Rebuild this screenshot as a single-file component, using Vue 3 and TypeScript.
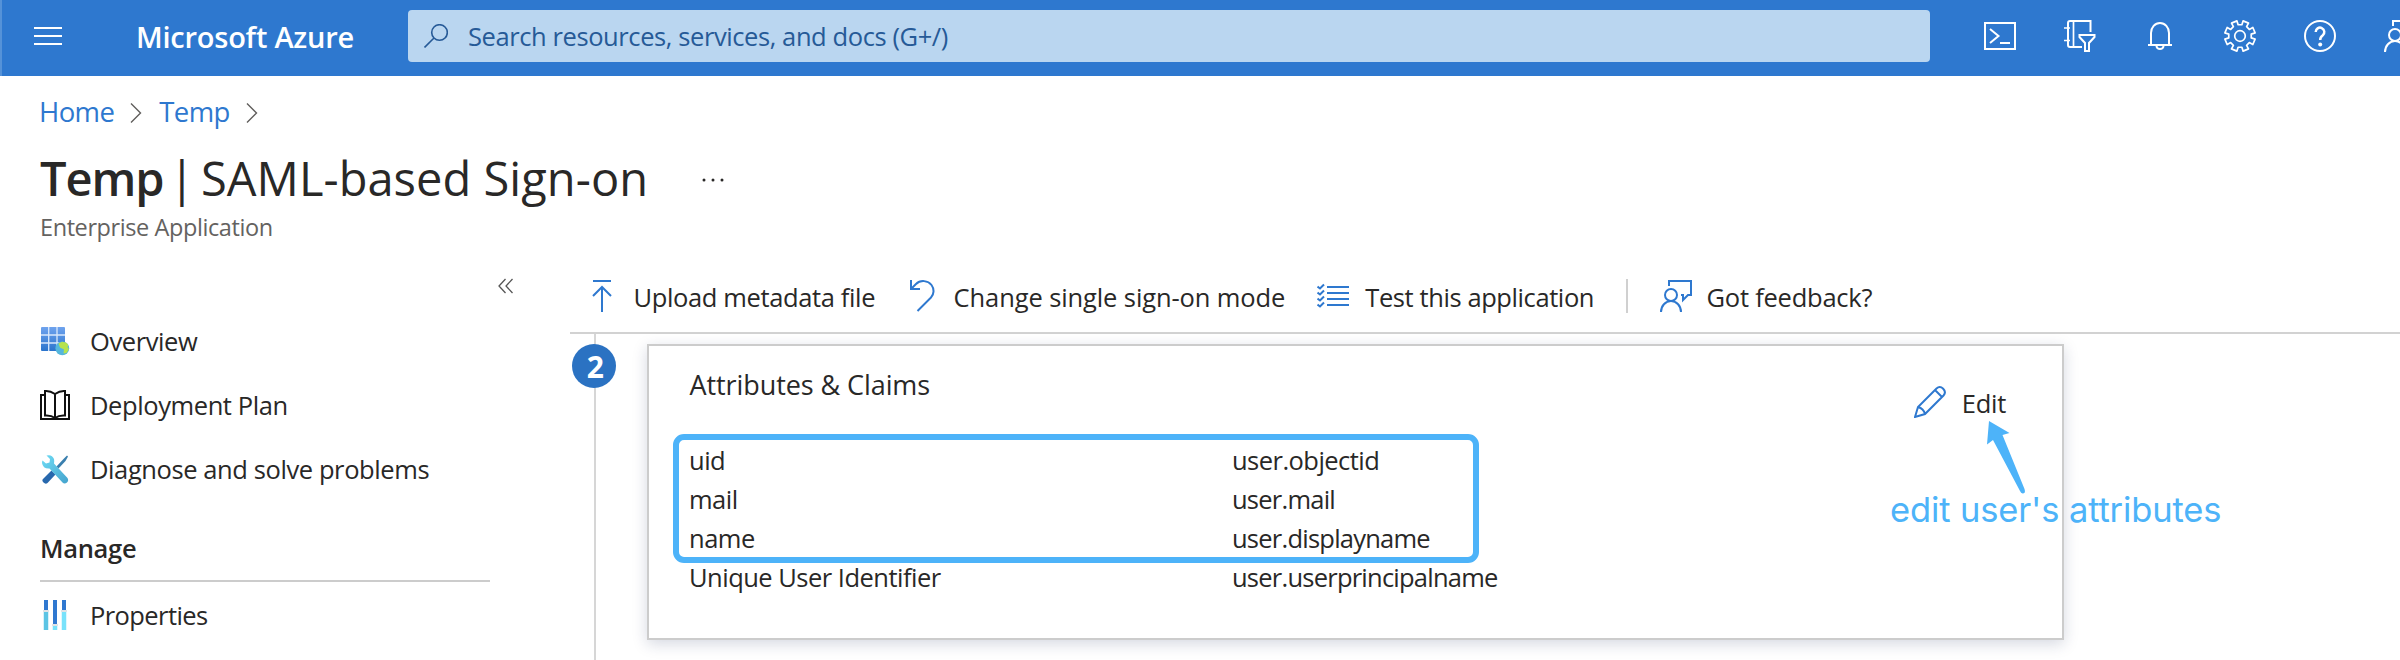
<script setup lang="ts">
interface Claim {
  name: string
  value: string
}

const claims: Claim[] = [
  { name: 'uid', value: 'user.objectid' },
  { name: 'mail', value: 'user.mail' },
  { name: 'name', value: 'user.displayname' },
  { name: 'Unique User Identifier', value: 'user.userprincipalname' },
]

// Outline of an eight-tooth gear, centred on (16, 16)
function gearPath(): string {
  const pts: string[] = []
  for (let i = 0; i < 8; i++) {
    const mid = 22.5 + i * 45
    const corners: [number, number][] = [[-13, 11.4], [-11, 15.4], [11, 15.4], [13, 11.4]]
    for (const [offset, r] of corners) {
      const a = ((mid + offset - 90) * Math.PI) / 180
      pts.push(`${(16 + r * Math.cos(a)).toFixed(2)} ${(16 + r * Math.sin(a)).toFixed(2)}`)
    }
  }
  return `M${pts.join('L')}Z`
}
const gear = gearPath()
</script>

<template>
  <div class="page">
    <header class="topbar">
      <svg class="burger" viewBox="0 0 28 18"><path d="M0 1H28M0 9H28M0 17H28" /></svg>
      <span class="brand">Microsoft Azure</span>
      <div class="search">
        <svg class="lens" viewBox="0 0 24 24"><circle cx="15.5" cy="8.5" r="7.8" /><path d="M10 14L.5 23.5" /></svg>
        <span>Search resources, services, and docs (G+/)</span>
      </div>
      <nav class="tools">
        <svg viewBox="0 0 32 32"><path d="M1 3H31V29H1Z" /><path d="M6 9L14.500 16L6 23" /><path d="M16 23H26" /></svg>
        <svg viewBox="0 0 32 32">
          <path d="M26.500 12V1H6Q4 1 4 3V25Q4 27 6 27H18" /><path class="thin" d="M9.500 1V27M0 8H6M0 20.500H6" />
          <path d="M15.500 15H30.500V17L25 23V31H21V23L15.500 17Z" />
        </svg>
        <svg viewBox="0 0 32 32"><path d="M7 25V13A9 10 0 0 1 25 13V25" /><path d="M4 25H28" /><path d="M12.500 26A3.500 3 0 0 0 19.500 26" /></svg>
        <svg viewBox="0 0 32 32"><path :d="gear" class="thin" stroke-linejoin="round" /><circle class="thin" cx="16" cy="16" r="5.300" /></svg>
        <svg viewBox="0 0 32 32">
          <circle cx="16" cy="16" r="15" />
          <path class="heavy" d="M11.700 12A4.300 4.300 0 1 1 18.800 15.200Q16.200 17 16.200 20" /><circle class="dot" cx="16.200" cy="24.500" r="2" />
        </svg>
        <svg viewBox="0 0 32 32"><path d="M9 6V1H31V15H28L23 20V15H21" /><circle cx="11" cy="15" r="6" /><path d="M1 32A10 11 0 0 1 21 32" /></svg>
      </nav>
    </header>

    <div class="crumbs">
      <a>Home</a>
      <svg viewBox="0 0 12 20"><path d="M1 .5L10.500 10L1 19.500" /></svg>
      <a>Temp</a>
      <svg viewBox="0 0 12 20"><path d="M1 .5L10.500 10L1 19.500" /></svg>
    </div>

    <div class="heading">
      <h1><b>Temp</b><span class="bar">|</span><span>SAML-based Sign-on</span></h1>
      <svg viewBox="0 0 24 4"><circle cx="3" cy="2" r="1.500" /><circle cx="12" cy="2" r="1.500" /><circle cx="21" cy="2" r="1.500" /></svg>
    </div>
    <p class="subtitle">Enterprise Application</p>

    <div class="body">
      <aside class="side">
        <svg class="collapse" viewBox="0 0 16 16"><path d="M7.500 1L1 8L7.500 15M14.500 1L8 8L14.500 15" /></svg>
        <ul class="menu">
          <li>
            <svg viewBox="0 0 32 32">
              <defs>
                <linearGradient id="tiles" x1="0" y1="0" x2="0" y2="1"><stop offset="0" stop-color="#6fa3ee" /><stop offset="1" stop-color="#2b74cc" /></linearGradient>
              </defs>
              <rect x="1" y="2" width="24" height="24" rx="1" fill="url(#tiles)" />
              <path d="M8.700 2V26M17 2V26M1 10H25M1 18H25" stroke="#d9e8fb" stroke-width="1.300" />
              <circle cx="22.300" cy="23.300" r="6.900" fill="#55b6dc" />
              <path d="M18.500 18.500L22 16.800L26 17.500L28.500 20L27.500 22L29 24L26.500 28L23.500 28.500L24 24.500L20 22.500Z" fill="#b6e34c" />
            </svg>
            <span>Overview</span>
          </li>
          <li>
            <svg viewBox="0 0 32 32">
              <path class="ink" d="M15 5Q10 1.500 5 2V26.500Q11 26 15 29Q19 26 25 26.500V2Q20 1.500 15 5V29" /><path class="ink" d="M5 6H1V30H29V6H25" />
            </svg>
            <span>Deployment Plan</span>
          </li>
          <li>
            <svg viewBox="0 0 32 32">
              <defs>
                <linearGradient id="wrench" x1="0" y1="0" x2="1" y2="1"><stop offset="0" stop-color="#6edcf5" /><stop offset="1" stop-color="#45a3cd" /></linearGradient>
              </defs>
              <path d="M27 2.500L28 3.500L25.500 8L18.500 15.500L16.500 13.500L23.500 6Z" fill="#3a7fae" />
              <path d="M11.500 17.500L15.500 21.500L7.500 30Q5.500 31.500 3.500 29.500Q1.500 27.500 3 26Z" fill="#2868ad" />
              <path d="M6.500 2.500Q12 1 14 6Q14.500 8.500 14 10.500L27.500 25Q29 27.500 27 29.500Q24.500 31.500 22.500 29.500L9.500 15.500Q3 16 2 10Q2 8 2.500 7.500L6 10.500L9.500 9.500L10 6Z" fill="url(#wrench)" />
            </svg>
            <span>Diagnose and solve problems</span>
          </li>
        </ul>
        <h2>Manage</h2>
        <ul class="menu second">
          <li>
            <svg viewBox="0 0 32 32">
              <path d="M6 1V11M15 1V25M24 1V11" stroke="#2f78d0" stroke-width="4" />
              <path d="M6 13V31" stroke="#5cc4e4" stroke-width="4.500" />
              <path d="M24 13V31M15 27V31" stroke="#78e2fb" stroke-width="4.500" />
              <path d="M3 12H9M21 12H27M12 26H18" stroke="#dfe3e6" />
            </svg>
            <span class="properties">Properties</span>
          </li>
        </ul>
      </aside>

      <main class="main">
        <div class="commands">
          <div class="cmd upload">
            <svg viewBox="0 0 32 32"><path d="M7 1H25M16 7V32M7 16L16 7L25 16" /></svg><span>Upload metadata file</span>
          </div>
          <div class="cmd change">
            <svg viewBox="0 0 32 32"><path d="M6 0V9H15M6 9L11 4C15.500 -.5 23 .5 26.500 5C29.500 9 29 14.500 26 17.500L12.500 31" /></svg><span>Change single sign-on mode</span>
          </div>
          <div class="cmd test">
            <svg viewBox="0 0 32 32">
              <path d="M10 7H32M10 13H32M10 19H32M10 25H32" /><path d="M.5 6.500L3 8.500L7 4.500M.5 12.500L3 14.500L7 10.500M.5 18.500L3 20.500L7 16.500M.5 24.500L3 26.500L7 22.500" />
            </svg><span>Test this application</span>
          </div>
          <i class="divider"></i>
          <div class="cmd feedback">
            <svg viewBox="0 0 32 32"><path d="M9 6V1H31V15H28L23 20V15H21" /><circle cx="11" cy="15" r="6" /><path d="M1 32A10 11 0 0 1 21 32" /></svg><span>Got feedback?</span>
          </div>
        </div>

        <div class="step">
          <div class="rail"><span class="badge">2</span></div>
          <section class="card">
            <div class="card-head">
              <h3>Attributes &amp; Claims</h3>
              <div class="edit">
                <svg viewBox="0 0 32 32"><path d="M1 31L4 21L22.500 2.500C27 -1.500 33.500 5 29.500 9.500L11 28ZM4 21Q9.500 22.500 11 28M21 4L28 11" /></svg><span>Edit</span>
              </div>
            </div>
            <dl class="claims">
              <template v-for="c in claims" :key="c.name">
                <dt>{{ c.name }}</dt>
                <dd>{{ c.value }}</dd>
              </template>
            </dl>
            <div class="highlight"></div>
            <svg class="arrow" viewBox="0 0 44 76"><path d="M4 1L24.500 13L17.500 15L39.500 69Q41 73.500 37.500 73.500Q36 73 35 71L8 20L2 24.500Z" /></svg>
            <span class="note">edit user's attributes</span>
          </section>
        </div>
      </main>
    </div>
  </div>
</template>

<style>
body {
  margin: 0;
  background: #fff;
}
</style>

<style scoped>
.page {
  width: 2400px;
  height: 660px;
  overflow: hidden;
  background: #fff;
  color: #292827;
  font-family: "Open Sans", "Noto Sans", sans-serif;
  font-size: 25.5px;
  letter-spacing: -0.016em;
  white-space: nowrap;
}
svg {
  display: block;
  flex: none;
  fill: none;
  stroke-width: 2;
}
.topbar {
  display: flex;
  align-items: center;
  box-sizing: border-box;
  height: 76px;
  padding: 0 0 4px 32px;
  background: #2e78cf;
  border-left: 2px solid #5592d8;
}
.burger {
  width: 28px;
  height: 18px;
  stroke: #fff;
}
.brand {
  flex: none;
  width: 272px;
  margin-left: 74px;
  color: #fff;
  font-size: 29px;
  font-weight: 600;
  letter-spacing: -0.008em;
}
.search {
  display: flex;
  flex: none;
  align-items: center;
  width: 1522px;
  height: 52px;
  border-radius: 4px;
  background: #bad6f0;
  color: #265a97;
  letter-spacing: -0.016em;
}
.lens {
  width: 24px;
  height: 24px;
  margin: 0 20px 0 16px;
  stroke: #265a97;
  stroke-width: 1.6;
}
.tools {
  display: flex;
  flex: none;
  gap: 48px;
  margin-left: 54px;
}
.tools svg {
  width: 32px;
  height: 32px;
  stroke: #fff;
}
.tools .thin {
  stroke-width: 1.7;
}
.tools .heavy {
  stroke-width: 2.5;
}
.tools .dot {
  fill: #fff;
  stroke: none;
}

.crumbs {
  display: flex;
  align-items: center;
  height: 71px;
  padding-left: 39px;
  color: #2e78cf;
  font-size: 27.5px;
  letter-spacing: -0.022em;
}
.crumbs svg {
  width: 12px;
  height: 20px;
  margin: 3px 17px 0 16px;
  stroke: #605e5c;
  stroke-width: 1.4;
}
.heading {
  display: flex;
  align-items: center;
  height: 61px;
  padding-left: 40px;
}
h1 {
  margin: 0;
  padding-top: 2px;
  font-size: 47px;
  font-weight: 400;
  line-height: 61px;
  letter-spacing: 0.001em;
}
h1 b {
  font-weight: 600;
  letter-spacing: -0.022em;
}
.bar {
  margin: 0 6px 0 5.5px;
}
.heading svg {
  width: 24px;
  height: 4px;
  margin: 5px 0 0 53px;
  fill: #292827;
}
.subtitle {
  height: 40px;
  margin: 0;
  padding-left: 40px;
  color: #646260;
  font-size: 23.5px;
  line-height: 38px;
}

.body {
  display: flex;
}
.side {
  flex: none;
  width: 570px;
}
.collapse {
  width: 16px;
  height: 16px;
  margin: 30px 0 0 498px;
  stroke: #555;
  stroke-width: 1.3;
}
.menu {
  margin: 15px 0 0;
  padding: 0 0 0 40px;
  list-style: none;
}
.menu li {
  display: flex;
  align-items: center;
  height: 64px;
}
.menu svg {
  width: 32px;
  height: 32px;
  margin-right: 18px;
}
.menu .ink {
  stroke: #111;
}
.menu.second {
  margin-top: 1px;
}
.properties {
  letter-spacing: -0.023em;
}
h2 {
  width: 450px;
  height: 55px;
  margin: 0 0 0 40px;
  padding-top: 24px;
  border-bottom: 2px solid #ccc;
  font-size: 25.5px;
  font-weight: 600;
  line-height: 46px;
  letter-spacing: -0.012em;
}

.main {
  flex: 1;
}
.commands {
  display: flex;
  align-items: center;
  box-sizing: border-box;
  height: 86px;
  padding: 12px 0 0 16px;
  border-bottom: 2px solid #d2d2d2;
}
.cmd {
  display: flex;
  align-items: center;
  height: 36px;
}
.cmd span,
.edit span {
  padding-top: 2px;
}
.cmd svg {
  width: 32px;
  height: 32px;
  margin-right: 16.5px;
  stroke: #2e78cf;
}
.upload {
  margin-right: 30px;
  letter-spacing: -0.0145em;
}
.upload svg {
  margin-right: 15.5px;
}
.change {
  margin-right: 31.5px;
  letter-spacing: -0.0042em;
}
.test {
  margin-right: 32px;
}
.divider {
  width: 2px;
  height: 34px;
  margin-right: 32px;
  background: #d0d0d0;
}
.feedback {
  letter-spacing: -0.0095em;
}
.feedback svg {
  margin-right: 14.5px;
}

.step {
  display: flex;
  height: 326px;
}
.rail {
  box-sizing: border-box;
  width: 77px;
  padding: 10px 0 0 2px;
  background: linear-gradient(#d6d6d6, #d6d6d6) 24px 0 / 2px 100% no-repeat;
}
.badge {
  display: flex;
  align-items: center;
  justify-content: center;
  box-sizing: border-box;
  width: 44px;
  height: 44px;
  padding-left: 2px;
  border-radius: 50%;
  background: #2b72c2;
  color: #fff;
  font-size: 30px;
  font-weight: 700;
}
.card {
  position: relative;
  box-sizing: border-box;
  width: 1417px;
  height: 296px;
  margin-top: 10px;
  border: 2px solid #ccc;
  background: #fff;
  box-shadow: 0 4px 14px rgba(20, 40, 90, 0.18);
}
.card-head {
  display: flex;
  height: 94.5px;
  padding: 0 56px 0 40.5px;
  justify-content: space-between;
  align-items: flex-start;
}
h3 {
  margin: 0;
  font-size: 27px;
  font-weight: 400;
  line-height: 78px;
  letter-spacing: -0.003em;
}
.edit {
  display: flex;
  align-items: center;
  height: 32px;
  margin-top: 40px;
  letter-spacing: -0.01em;
}
.edit svg {
  width: 32px;
  height: 32px;
  margin-right: 16px;
  stroke: #2e78cf;
}
.claims {
  display: grid;
  grid-template-columns: 543px 1fr;
  grid-auto-rows: 39px;
  margin: 0;
  padding-left: 40px;
  line-height: 39px;
}
dt {
  letter-spacing: -0.02em;
}
dd {
  margin: 0;
  letter-spacing: -0.03em;
}
dd:first-of-type {
  letter-spacing: -0.021em;
}
.highlight {
  position: absolute;
  left: 24px;
  top: 88px;
  box-sizing: border-box;
  width: 806px;
  height: 129px;
  border: 6px solid #4db3f9;
  border-radius: 11px;
}
.arrow {
  position: absolute;
  left: 1336px;
  top: 74px;
  width: 44px;
  height: 76px;
  fill: #4db3f9;
}
.note {
  position: absolute;
  left: 1241px;
  top: 142px;
  color: #4db3f9;
  font: 34.5px/44px Inter, sans-serif;
  letter-spacing: -0.004em;
}
</style>
